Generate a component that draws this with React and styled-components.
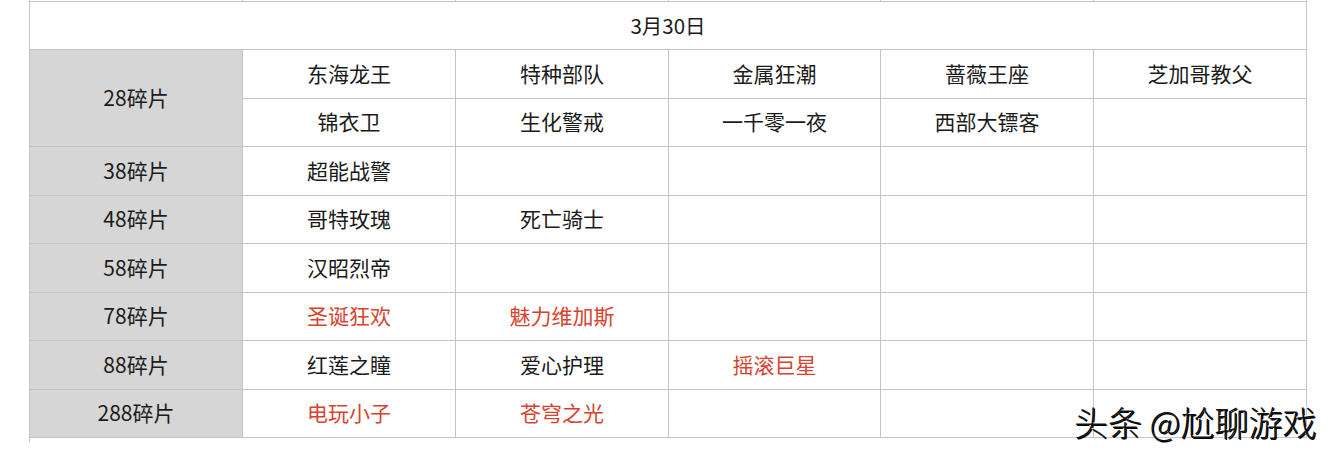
import React from "react";
import styled, { createGlobalStyle } from "styled-components";

const Global = createGlobalStyle`
  html, body { margin: 0; padding: 0; background: #fff; }
  body { font-family: "Noto Sans CJK SC", "Noto Sans", sans-serif; }
`;

const Page = styled.div`
  position: relative;
  width: 1334px;
  height: 457px;
  overflow: hidden;
  padding-left: 29px;
  box-sizing: border-box;
`;

const Grid = styled.div`
  display: grid;
  grid-template-columns: 213px 213px 213px 212px 213px 213px;
  grid-template-rows: 1px 49px 49px 48px 49px 48px 49px 48px 49px 48px 4px;
  width: 1278px;
  border-left: 1px solid #c4c4c4;
  box-sizing: border-box;
`;

const Stub = styled.div`
  border-right: 1px solid #c4c4c4;
  box-sizing: border-box;
`;

const Header = styled.div`
  grid-column: 1 / span 6;
  border-top: 1px solid #c4c4c4;
  border-bottom: 1px solid #c4c4c4;
  border-right: 1px solid #c4c4c4;
  box-sizing: border-box;
  display: flex;
  align-items: center;
  justify-content: center;
  padding-bottom: 2px;
  font-size: 20.5px;
  color: #1b1b1b;
`;

const Cell = styled.div`
  border-right: 1px solid #c4c4c4;
  border-bottom: 1px solid #c4c4c4;
  box-sizing: border-box;
  display: flex;
  align-items: center;
  justify-content: center;
  padding-bottom: 3px;
  font-size: 21px;
  color: ${(p) => (p.$red ? "#d8432f" : "#1b1b1b")};
  background: ${(p) => (p.$label ? "#d6d6d6" : "#fff")};
  grid-row: ${(p) => (p.$span ? `span ${p.$span}` : "auto")};
`;

const Watermark = styled.div`
  position: absolute;
  left: 1074px;
  top: 397px;
  font-size: 34px;
  font-weight: 300;
  color: #111;
  white-space: nowrap;
  text-shadow: -1px -1px 0 #fff, 1px 1px 0 #000;
`;

const rows = [
  { label: "28碎片", span: 2, lines: [
    [["东海龙王"], ["特种部队"], ["金属狂潮"], ["蔷薇王座"], ["芝加哥教父"]],
    [["锦衣卫"], ["生化警戒"], ["一千零一夜"], ["西部大镖客"], [""]],
  ]},
  { label: "38碎片", lines: [[["超能战警"], [""], [""], [""], [""]]] },
  { label: "48碎片", lines: [[["哥特玫瑰"], ["死亡骑士"], [""], [""], [""]]] },
  { label: "58碎片", lines: [[["汉昭烈帝"], [""], [""], [""], [""]]] },
  { label: "78碎片", lines: [[["圣诞狂欢", 1], ["魅力维加斯", 1], [""], [""], [""]]] },
  { label: "88碎片", lines: [[["红莲之瞳"], ["爱心护理"], ["摇滚巨星", 1], [""], [""]]] },
  { label: "288碎片", lines: [[["电玩小子", 1], ["苍穹之光", 1], [""], [""], [""]]] },
];

export default function App() {
  return (
    <>
      <Global />
      <Page>
        <Grid>
          {Array.from({ length: 6 }).map((_, i) => (
            <Stub key={"s" + i} />
          ))}
          <Header>3月30日</Header>
          {rows.map((r, ri) => (
            <React.Fragment key={ri}>
              <Cell $label $span={r.span}>{r.label}</Cell>
              {r.lines.map((line, li) => (
                <React.Fragment key={li}>
                  {line.map(([t, red], ci) => (
                    <Cell key={ci} $red={!!red}>{t}</Cell>
                  ))}
                </React.Fragment>
              ))}
            </React.Fragment>
          ))}
        </Grid>
        <Watermark>头条 @尬聊游戏</Watermark>
      </Page>
    </>
  );
}
